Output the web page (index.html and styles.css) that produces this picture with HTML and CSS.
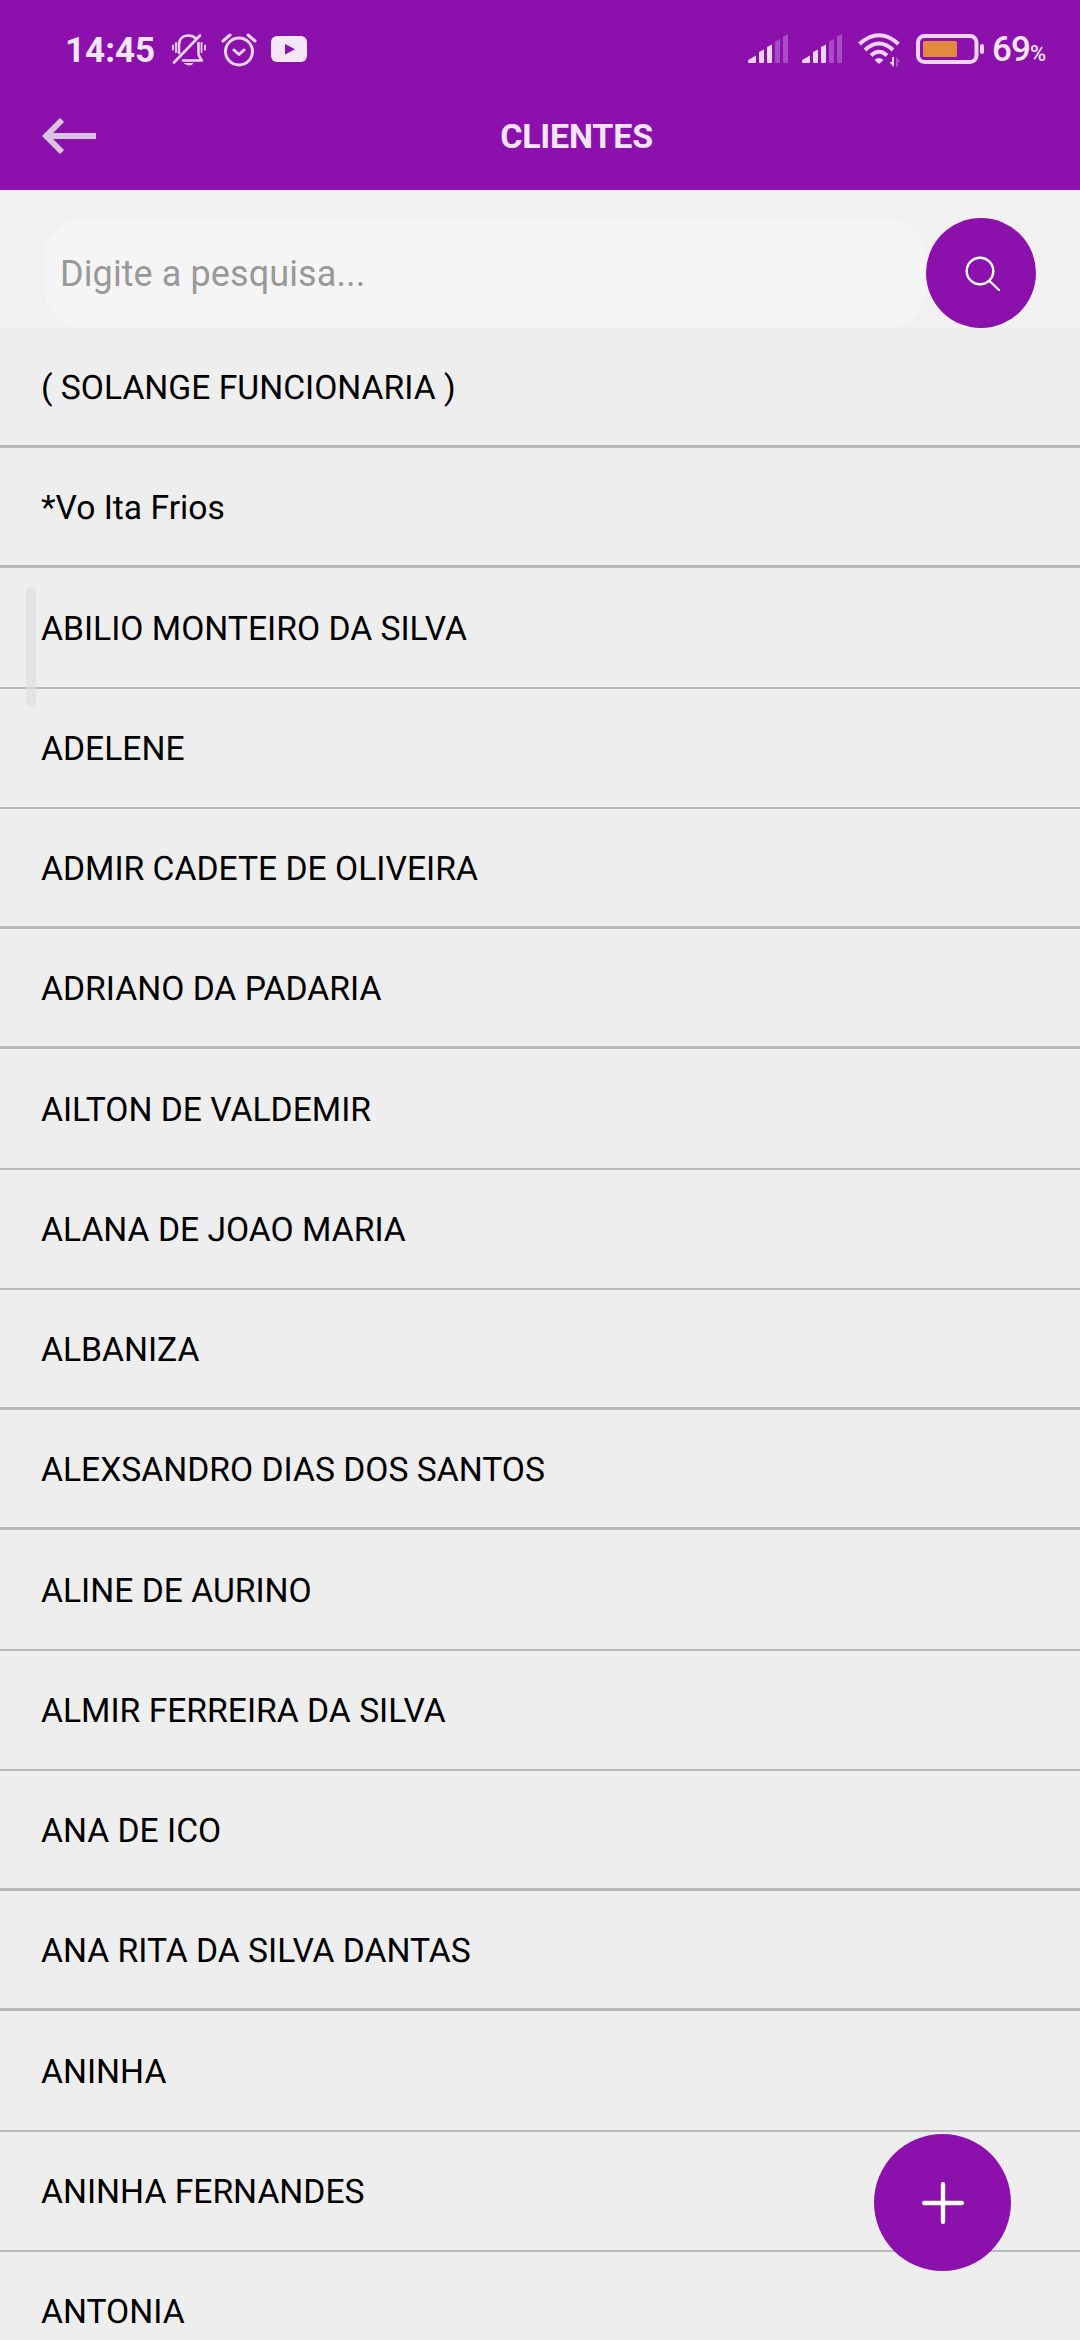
FILE: index.html
```html
<!DOCTYPE html>
<html lang="pt-BR">
<head>
<meta charset="utf-8">
<title>Clientes</title>
<link rel="stylesheet" href="styles.css">
</head>
<body>
<header class="top">
  <div class="status">
    <div class="status-left">
      <span class="clock">14:45</span>
      <svg class="icon bell" width="36" height="34" viewBox="0 0 36 34" fill="none" stroke="#eed5f5" stroke-width="2.6" stroke-linecap="round" stroke-linejoin="round">
        <path d="M8 20V12C8 6 12 2.5 17.5 2.5C21 2.5 23 3.5 25 5.5M27.500 10V20C27.500 23 29 25 31 27.500H12M3 29.500L29 2.500"/>
        <path d="M2 12.500V16.500M5 10V19M30.500 10V19M34 12.500V16.500" stroke-width="1.8"/>
        <path d="M14 30.500H22Q18 33.500 14 30.500Z" fill="#eed5f5" stroke-width="1"/>
      </svg>
      <svg class="icon alarm" width="36" height="36" viewBox="0 0 36 36" fill="none" stroke="#eed5f5" stroke-width="3" stroke-linecap="round" stroke-linejoin="round">
        <circle cx="18" cy="19.500" r="13.500"/>
        <path d="M13 18L18 22.500L23 18M2 9L9 3M34 9L27 3"/>
      </svg>
      <svg class="icon video" width="36" height="27" viewBox="0 0 36 27">
        <rect width="36" height="26" rx="6" fill="#f4e6f8"/>
        <path d="M14 8V18.500L24 13.200Z" fill="#8c10ac"/>
      </svg>
    </div>
    <div class="status-right">
      <svg class="icon signal" width="42" height="30" viewBox="0 0 42 30" fill="#eed5f5">
        <path d="M0 27Q0 26 1 25.500L8 21.500V28Q8 29 7 29H1Q0 29 0 28Z"/>
        <path d="M11 18L16 15.500V28Q16 29 15 29H12Q11 29 11 28ZM19 13L24 10.500V28Q24 29 23 29H20Q19 29 19 28Z"/>
        <path opacity=".3" d="M27 7.500L32 5V28Q32 29 31 29H28Q27 29 27 28ZM35 2.500L40 0V28Q40 29 39 29H36Q35 29 35 28Z"/>
      </svg>
      <svg class="icon signal-two" width="42" height="30" viewBox="0 0 42 30" fill="#eed5f5">
        <path d="M0 27Q0 26 1 25.500L8 21.500V28Q8 29 7 29H1Q0 29 0 28Z"/>
        <path d="M11 18L16 15.500V28Q16 29 15 29H12Q11 29 11 28ZM19 13L24 10.500V28Q24 29 23 29H20Q19 29 19 28Z"/>
        <path opacity=".3" d="M27 7.500L32 5V28Q32 29 31 29H28Q27 29 27 28ZM35 2.500L40 0V28Q40 29 39 29H36Q35 29 35 28Z"/>
      </svg>
      <svg class="icon wifi" width="44" height="34" viewBox="0 0 44 34">
        <g fill="none" stroke="#eed5f5" stroke-width="4">
          <path d="M1.500 11Q21 -6.500 40.500 11M7 17Q21 4 35 17M13 22.500Q21 15 29 22.500"/>
        </g>
        <path d="M16.500 27Q21 23 25.500 27L21 31Z" fill="#eed5f5"/>
        <path d="M31.500 29H34V24H36V33.500H35Z" fill="#eed5f5"/>
        <path d="M38 24L42.500 28.500H40V33.500H38Z" fill="#b057c8"/>
      </svg>
      <svg class="icon battery" width="69" height="31" viewBox="0 0 69 31">
        <rect x="2" y="2" width="58.500" height="26" rx="6.500" fill="none" stroke="#eed5f5" stroke-width="4"/>
        <rect x="7" y="7" width="34" height="16" rx="1.500" fill="#e08b3e"/>
        <rect x="64" y="10" width="4" height="10" rx="2" fill="#eed5f5"/>
      </svg>
      <span class="level">69<small class="percent">%</small></span>
    </div>
  </div>
  <div class="titlebar">
    <svg class="back" width="55" height="36" viewBox="0 0 55 36" fill="none" stroke="#d9c3df" stroke-width="5.800">
      <path d="M20 2L4 18L20 34M4 18H54"/>
    </svg>
    <h1 class="title">CLIENTES</h1>
  </div>
</header>
<div class="search">
  <input class="field" type="text" placeholder="Digite a pesquisa...">
  <button class="find" aria-label="Pesquisar">
    <svg width="36" height="36" viewBox="0 0 36 36" fill="none" stroke="#fff" stroke-width="2.400" stroke-linecap="round">
      <circle cx="15" cy="15" r="13.300"/><path d="M24.500 25L34 34"/>
    </svg>
  </button>
</div>
<ul class="clients">
  <li>( SOLANGE FUNCIONARIA )</li>
  <li>*Vo Ita Frios</li>
  <li>ABILIO MONTEIRO DA SILVA</li>
  <li>ADELENE</li>
  <li>ADMIR CADETE DE OLIVEIRA</li>
  <li>ADRIANO DA PADARIA</li>
  <li>AILTON DE VALDEMIR</li>
  <li>ALANA DE JOAO MARIA</li>
  <li>ALBANIZA</li>
  <li>ALEXSANDRO DIAS DOS SANTOS</li>
  <li>ALINE DE AURINO</li>
  <li>ALMIR FERREIRA DA SILVA</li>
  <li>ANA DE ICO</li>
  <li>ANA RITA DA SILVA DANTAS</li>
  <li>ANINHA</li>
  <li>ANINHA FERNANDES</li>
  <li>ANTONIA</li>
</ul>
<div class="scroll-handle"></div>
<button class="add" aria-label="Adicionar">
  <svg width="42" height="42" viewBox="0 0 42 42" stroke="#fff" stroke-width="4.400" stroke-linecap="round"><path d="M21 2.200V39.800M2.200 21H39.800"/></svg>
</button>
</body>
</html>
```

FILE: styles.css
```css
* { box-sizing: border-box; }
body {
  margin: 0;
  width: 1080px;
  height: 2340px;
  overflow: hidden;
  position: relative;
  background: #eee;
  font-family: Roboto, "Liberation Sans", sans-serif;
  color: #000;
}
svg { display: block; flex: none; }
button { border: 0; padding: 0; background: #8c10ac; border-radius: 50%; display: grid; place-items: center; }

.top { height: 190px; background: #8c10ac; }
.status { height: 90px; display: flex; justify-content: space-between; padding: 0 34px 0 65px; }
.status-left, .status-right { display: flex; align-items: flex-start; }
.clock { width: 106px; padding-top: 30px; font-size: 35px; line-height: 42px; font-weight: 700; color: #f4e6f8; letter-spacing: 0; }
.bell { margin-top: 33px; }
.alarm { margin: 32px 0 0 14px; }
.video { margin: 36px 0 0 14px; }
.signal, .signal-two { margin-top: 34px; }
.signal-two { margin-left: 12px; }
.wifi { margin: 33px 0 0 14px; }
.battery { margin: 34px 0 0 14px; }
.level { width: 54px; margin-left: 7px; padding-top: 29px; white-space: nowrap; font-size: 35px; line-height: 42px; font-weight: 500; letter-spacing: -0.9px; color: #f4e6f8; }
.percent { font-size: 22px; }

.titlebar { height: 100px; display: flex; align-items: flex-start; padding: 0 24px 0 42px; }
.back { margin-top: 28px; }
.title { flex: 1; margin: 26px 0 0; font-size: 34px; line-height: 40px; font-weight: 700; color: #f4e6f8; letter-spacing: -0.2px; text-align: center; }

.search { height: 138px; display: flex; padding: 28px 44px 0 44px; background: #f1f1f1; }
.field { flex: 1; height: 110px; border: 0; border-radius: 40px; background: #f5f5f5; padding: 2px 16px 0; font: 400 36px Roboto, "Liberation Sans", sans-serif; letter-spacing: 0.1px; outline: 0; }
.field::placeholder { color: #999; opacity: 1; }
.find { width: 110px; height: 110px; padding: 2px 0 0 3px; }

.clients { list-style: none; margin: 0; padding: 0; }
.clients li {
  height: 120px;
  padding: 0 41px;
  line-height: 122px;
  font-size: 33.65px;
  text-rendering: geometricPrecision;
  white-space: nowrap;
  border-bottom: 3px solid #bababa;
}
.clients li:nth-child(4n+3) { height: 121px; line-height: 124px; border-bottom-width: 2px; }
.clients li:nth-child(4n) { border-bottom-width: 2px; }

.scroll-handle { position: absolute; left: 26px; top: 587px; width: 10px; height: 120px; border-radius: 5px; background: rgba(224, 224, 224, 0.7); }
.add { position: absolute; left: 874px; top: 2134px; width: 137px; height: 137px; padding-top: 1px; }
```
